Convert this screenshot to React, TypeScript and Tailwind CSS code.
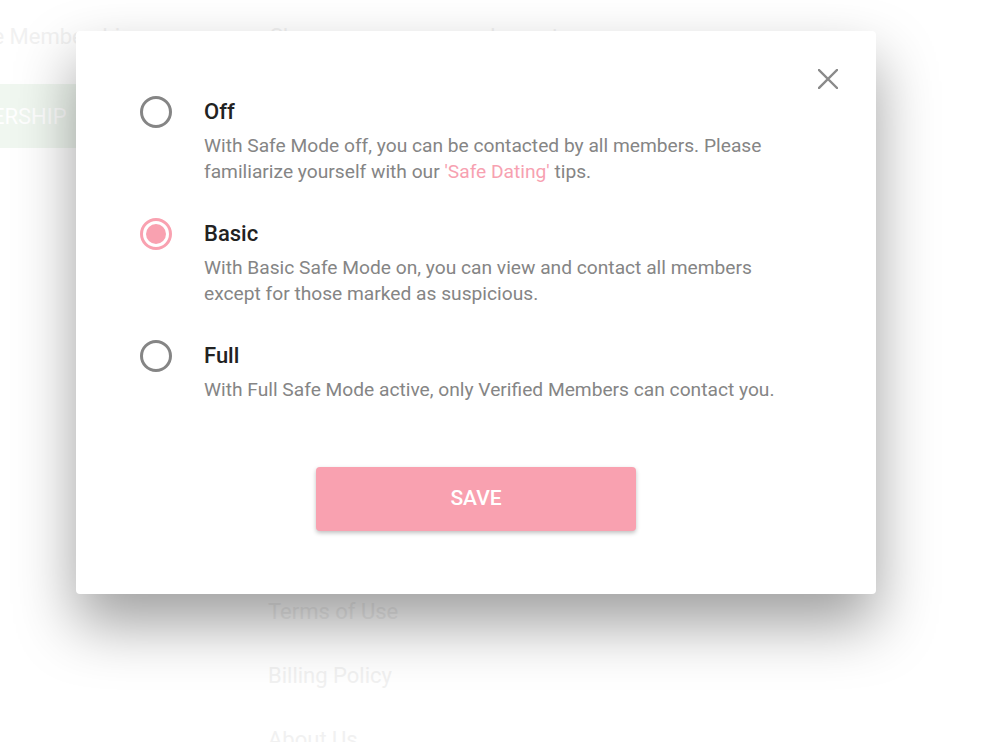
import { useState } from "react"

const options = [
    {
        key: "off",
        title: "Off",
        desc: (
            <>
                With Safe Mode off, you can be contacted by all members. Please
                <br />
                familiarize yourself with our <span className="text-[#f7a1b1]">'Safe Dating'</span> tips.
            </>
        ),
    },
    {
        key: "basic",
        title: "Basic",
        desc: (
            <>
                With Basic Safe Mode on, you can view and contact all members
                <br />
                except for those marked as suspicious.
            </>
        ),
    },
    {
        key: "full",
        title: "Full",
        desc: <>With Full Safe Mode active, only Verified Members can contact you.</>,
    },
]

function Radio({ checked }: { checked: boolean }) {
    return (
        <span
            className={
                checked
                    ? "w-8 h-8 rounded-full border-[3px] border-[#f9a1b0] flex items-center justify-center"
                    : "w-8 h-8 rounded-full border-[3px] border-[#858585] flex items-center justify-center"
            }
        >
            {checked && <span className="w-5 h-5 rounded-full bg-[#f9a1b0]" />}
        </span>
    )
}

export default function App() {
    const [mode, setMode] = useState("basic")

    return (
        <div className="relative w-[1002px] h-[742px] overflow-hidden bg-white font-['Roboto',sans-serif]">
            {/* page behind the dialog */}
            <div className="flex flex-col text-[#efefef]">
                <div className="flex items-center h-[24px] mt-[25px] text-[22px] leading-[24px]">
                    <span className="ml-[-40px] w-[310px]">Safe Membership</span>
                    <span className="w-[220px]">Show</span>
                    <span>Logout</span>
                </div>
                <div className="mt-[35px] ml-[-128px] w-[250px] h-[64px] bg-[#eef6ee] text-white text-[22px] flex items-center justify-center">
                    MEMBERSHIP
                </div>
                <div className="ml-[268px] mt-[450px] flex flex-col gap-[36px] text-[22px] leading-[28px]">
                    <span>Terms of Use</span>
                    <span>Billing Policy</span>
                    <span>About Us</span>
                </div>
            </div>

            {/* dialog */}
            <div className="absolute inset-0 bg-white/10">
                <div className="relative ml-[76px] mt-[31px] w-[800px] h-[563px] bg-white rounded-[4px] shadow-[0_30px_60px_rgba(0,0,0,0.38)] pt-[67px] px-[64px]">
                    <button className="absolute top-[38px] right-[38px] w-5 h-5 flex items-center justify-center">
                        <svg width="20" height="20" viewBox="0 0 20 20">
                            <path d="M1 1 L19 19 M19 1 L1 19" stroke="#8a8a8a" strokeWidth="2.4" strokeLinecap="square" />
                        </svg>
                    </button>

                    <div className="flex flex-col gap-[35px]">
                        {options.map((o) => (
                            <div key={o.key} className="flex cursor-pointer" onClick={() => setMode(o.key)}>
                                <div className="mt-[-2px] w-8 shrink-0">
                                    <Radio checked={mode === o.key} />
                                </div>
                                <div className="ml-[32px] flex flex-col">
                                    <span className="text-[22px] leading-[28px] font-medium text-[#222]">{o.title}</span>
                                    <p className="mt-[7px] text-[19.2px] leading-[26px] text-[#858585]">{o.desc}</p>
                                </div>
                            </div>
                        ))}
                    </div>

                    <div className="flex justify-center mt-[64px]">
                        <button className="w-[320px] h-[64px] rounded-[4px] bg-[#f9a1b0] text-white text-[21px] font-medium shadow-[0_2px_4px_rgba(0,0,0,0.25)]">
                            SAVE
                        </button>
                    </div>
                </div>
            </div>
        </div>
    )
}
